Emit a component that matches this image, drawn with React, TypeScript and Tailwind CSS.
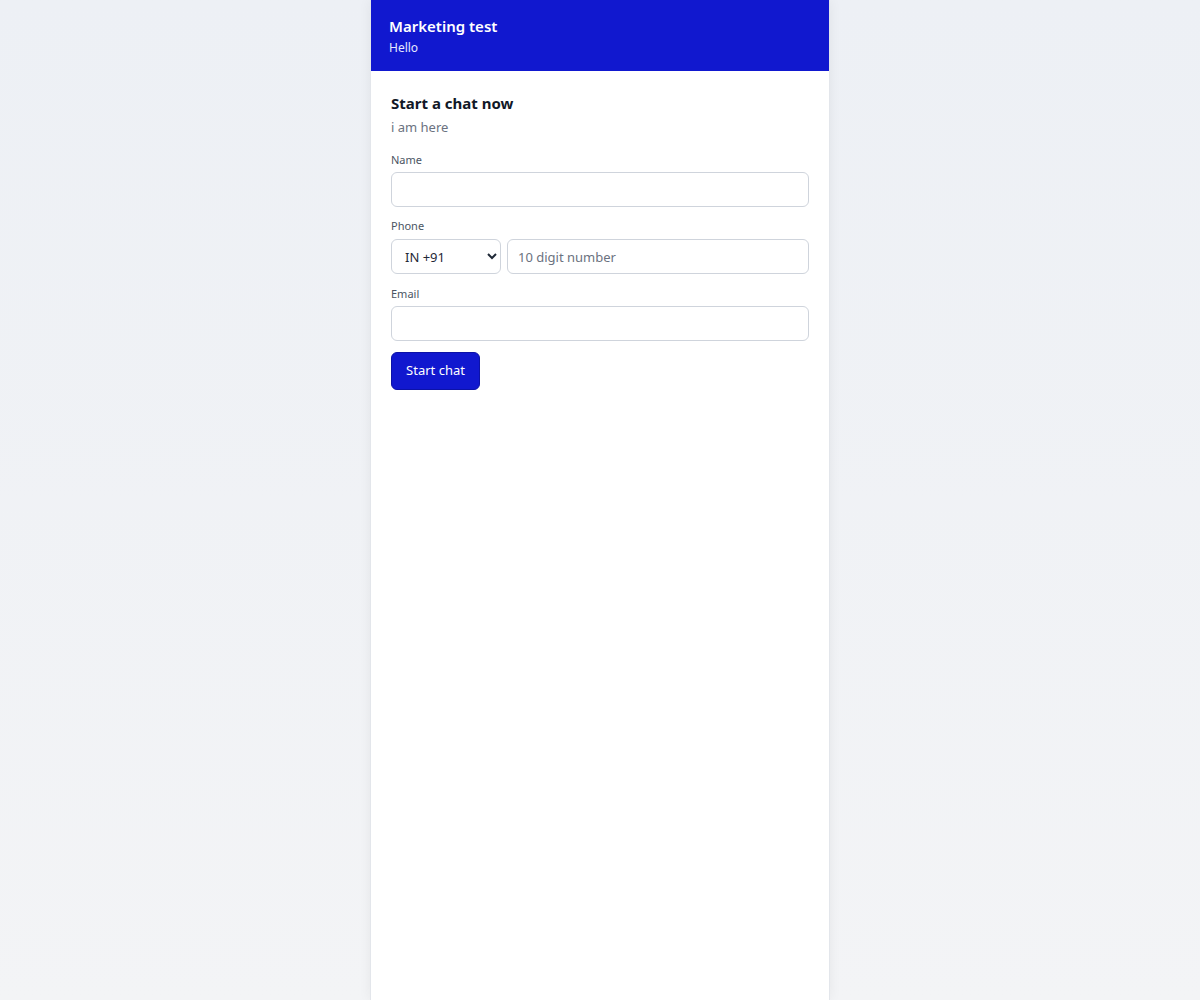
import React, { useState } from 'react';

const App: React.FC = () => {
  const [name, setName] = useState('');
  const [code, setCode] = useState('+91');
  const [phone, setPhone] = useState('');
  const [email, setEmail] = useState('');

  const inputCls =
    'w-full h-[35px] rounded-md border border-[#cfd4dc] bg-white px-[10px] text-[13px] text-[#1f2937] outline-none placeholder-[#6b7280] focus:border-[#1118cf]';

  return (
    <div
      className="min-h-[1000px] w-full bg-linear-to-b from-[#edf0f5] to-[#f3f4f6] flex justify-center"
      style={{ fontFamily: '"Noto Sans", "Open Sans", sans-serif' }}
    >
      <div className="w-[460px] min-h-[1000px] bg-white border-x border-[#e3e6eb] shadow-[0_0_12px_rgba(15,23,42,0.06)] flex flex-col">
        {/* Header */}
        <div className="h-[71px] bg-[#1118cf] px-[18px] pt-[15px]">
          <div className="text-[15px] font-semibold leading-[22px] text-white">Marketing test</div>
          <div className="mt-[3px] text-[12px] leading-[16px] text-[#e6e8ff]">Hello</div>
        </div>

        {/* Form */}
        <form
          className="px-[20px] pt-[22px]"
          onSubmit={(e) => e.preventDefault()}
        >
          <h2 className="text-[15px] font-bold leading-[20px] text-[#111827]">Start a chat now</h2>
          <p className="mt-[4px] text-[13px] leading-[20px] text-[#6b7280]">i am here</p>

          <label className="mt-[15px] block text-[11px] leading-[16px] text-[#4b5563]">Name</label>
          <input
            className={`${inputCls} mt-[4px]`}
            value={name}
            onChange={(e) => setName(e.target.value)}
          />

          <label className="mt-[11px] block text-[11px] leading-[16px] text-[#4b5563]">Phone</label>
          <div className="mt-[5px] flex gap-[6px]">
            <select
              className="h-[35px] w-[110px] shrink-0 rounded-md border border-[#cfd4dc] bg-white pl-[9px] pr-[2px] text-[13px] text-[#1f2937] outline-none"
              value={code}
              onChange={(e) => setCode(e.target.value)}
            >
              <option value="+91">IN +91</option>
              <option value="+1">US +1</option>
              <option value="+44">UK +44</option>
            </select>
            <input
              className={inputCls}
              placeholder="10 digit number"
              value={phone}
              onChange={(e) => setPhone(e.target.value)}
            />
          </div>

          <label className="mt-[12px] block text-[11px] leading-[16px] text-[#4b5563]">Email</label>
          <input
            className={`${inputCls} mt-[4px]`}
            value={email}
            onChange={(e) => setEmail(e.target.value)}
          />

          <button
            type="submit"
            className="mt-[11px] h-[38px] w-[89px] rounded-md border border-[#0c12a8] bg-[#1118cf] text-[13px] text-white"
          >
            Start chat
          </button>
        </form>
      </div>
    </div>
  );
};

export default App;
